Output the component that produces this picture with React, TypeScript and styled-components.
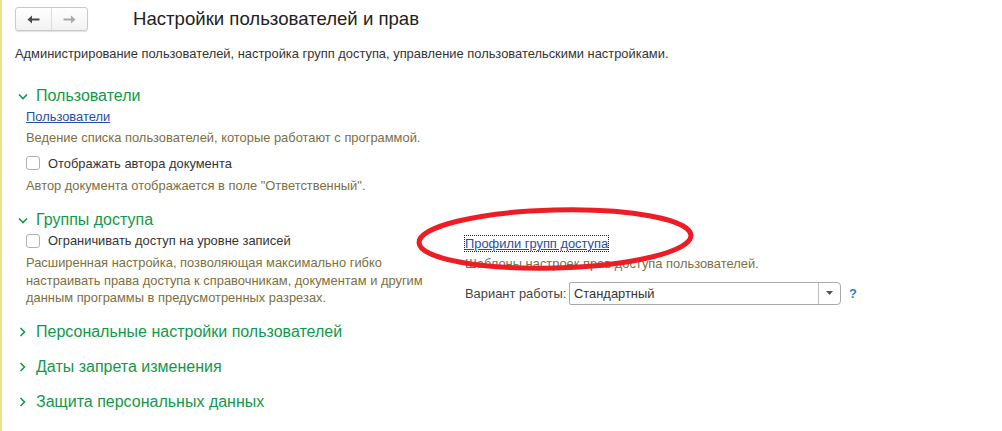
import React from "react";
import styled, { createGlobalStyle } from "styled-components";

const GlobalStyle = createGlobalStyle`
  html, body {
    margin: 0;
    padding: 0;
    background: #ffffff;
  }
  body {
    font-family: "Liberation Sans", Arial, sans-serif;
    font-size: 12.9px;
    color: #333333;
  }
`;

const Page = styled.div`
  position: relative;
  width: 1002px;
  height: 431px;
  box-sizing: border-box;
  border-left: 2px solid #f1df8a;
  padding: 7px 0 0 13px;
  overflow: hidden;
`;

const Header = styled.div`
  display: flex;
  align-items: center;
  height: 24px;
`;

const NavGroup = styled.div`
  display: flex;
  width: 73px;
  height: 24px;
  box-sizing: border-box;
  border: 1px solid #c9c9c9;
  border-radius: 3px;
  background: linear-gradient(#ffffff, #f2f2f2);
  box-shadow: 0 1px 1px rgba(0, 0, 0, 0.12);
`;

const NavButton = styled.div<{ $divider?: boolean }>`
  flex: 1;
  display: flex;
  align-items: center;
  justify-content: center;
  border-right: ${(p) => (p.$divider ? "1px solid #dcdcdc" : "none")};
`;

const Title = styled.h1`
  margin: 0 0 0 45px;
  font-size: 18.6px;
  font-weight: normal;
  line-height: 24px;
  color: #222222;
`;

const Description = styled.div`
  margin-top: 15px;
  line-height: 16px;
  color: #333333;
`;

const GroupHeader = styled.div<{ $gap: number }>`
  display: flex;
  align-items: center;
  margin-top: ${(p) => p.$gap}px;
  height: 20px;
  font-size: 16px;
  color: #12984a;
`;

const Chevron = styled.span`
  display: inline-flex;
  width: 15px;
  justify-content: center;
  margin-right: 6px;
`;

const GroupBody = styled.div`
  padding-left: 11px;
`;

const Link = styled.a<{ $focused?: boolean }>`
  color: #1f4ea4;
  text-decoration: underline;
  line-height: 16px;
  outline: ${(p) => (p.$focused ? "1px dotted #222" : "none")};
  outline-offset: 0;
`;

const Line = styled.div<{ $gap?: number }>`
  margin-top: ${(p) => p.$gap ?? 0}px;
  line-height: 21px;
`;

const Note = styled.div<{ $gap?: number }>`
  margin-top: ${(p) => p.$gap ?? 0}px;
  line-height: 17.5px;
  color: #7b6f42;
`;

const CheckRow = styled.label<{ $gap?: number }>`
  display: flex;
  align-items: center;
  margin-top: ${(p) => p.$gap ?? 0}px;
  height: 21px;
  color: #333333;
`;

const CheckBox = styled.span`
  width: 14px;
  height: 14px;
  box-sizing: border-box;
  border: 1px solid #b0b0b0;
  border-radius: 3px;
  background: #ffffff;
  margin-right: 8px;
`;

const Columns = styled.div`
  display: grid;
  grid-template-columns: 439px 1fr;
`;

const Column = styled.div<{ $top?: number }>`
  padding-top: ${(p) => p.$top ?? 0}px;
`;

const FieldRow = styled.div`
  display: flex;
  align-items: center;
  margin-top: 9px;
  height: 23px;
`;

const FieldLabel = styled.span`
  width: 104px;
  color: #444444;
`;

const Combo = styled.div`
  display: flex;
  width: 272px;
  height: 23px;
  box-sizing: border-box;
  border: 1px solid #a9a9a9;
  border-radius: 2px 4px 4px 2px;
  background: #ffffff;
`;

const ComboValue = styled.div`
  flex: 1;
  padding-left: 4px;
  line-height: 21px;
  color: #333333;
`;

const ComboButton = styled.div`
  width: 21px;
  border-left: 1px solid #bdbdbd;
  display: flex;
  align-items: center;
  justify-content: center;
`;

const Help = styled.span`
  margin-left: 8px;
  font-weight: bold;
  color: #2d7fcf;
`;

const Highlight = styled.svg`
  position: absolute;
  left: 412px;
  top: 205px;
  pointer-events: none;
`;

const DownChevron = () => (
  <svg width="10" height="7" viewBox="0 0 10 7">
    <path d="M1 1.5 L5 5.5 L9 1.5" fill="none" stroke="#12984a" strokeWidth="1.6" />
  </svg>
);

const RightChevron = () => (
  <svg width="7" height="10" viewBox="0 0 7 10">
    <path d="M1.5 1 L5.5 5 L1.5 9" fill="none" stroke="#12984a" strokeWidth="1.6" />
  </svg>
);

const Arrow = ({ dir, color }: { dir: "left" | "right"; color: string }) => (
  <svg width="13" height="9" viewBox="0 0 13 9" style={{ transform: dir === "right" ? "scaleX(-1)" : undefined }}>
    <path d="M0.5 4.5 L5 0.5 L5 3.5 L12.5 3.5 L12.5 5.5 L5 5.5 L5 8.5 Z" fill={color} />
  </svg>
);

const collapsed = [
  "Персональные настройки пользователей",
  "Даты запрета изменения",
  "Защита персональных данных",
];

const App: React.FC = () => {
  return (
    <>
      <GlobalStyle />
      <Page>
        <Header>
          <NavGroup>
            <NavButton $divider>
              <Arrow dir="left" color="#4a4a4a" />
            </NavButton>
            <NavButton>
              <Arrow dir="right" color="#a9a9a9" />
            </NavButton>
          </NavGroup>
          <Title>Настройки пользователей и прав</Title>
        </Header>

        <Description>
          Администрирование пользователей, настройка групп доступа, управление пользовательскими настройками.
        </Description>

        <GroupHeader $gap={24}>
          <Chevron>
            <DownChevron />
          </Chevron>
          Пользователи
        </GroupHeader>
        <GroupBody>
          <Line>
            <Link href="#">Пользователи</Link>
          </Line>
          <Note $gap={2}>Ведение списка пользователей, которые работают с программой.</Note>
          <CheckRow $gap={6}>
            <CheckBox />
            Отображать автора документа
          </CheckRow>
          <Note $gap={3}>Автор документа отображается в поле "Ответственный".</Note>
        </GroupBody>

        <GroupHeader $gap={16}>
          <Chevron>
            <DownChevron />
          </Chevron>
          Группы доступа
        </GroupHeader>
        <GroupBody>
          <Columns>
            <Column>
              <CheckRow $gap={0}>
                <CheckBox />
                Ограничивать доступ на уровне записей
              </CheckRow>
              <Note $gap={3}>
                Расширенная настройка, позволяющая максимально гибко
                <br />
                настраивать права доступа к справочникам, документам и другим
                <br />
                данным программы в предусмотренных разрезах.
              </Note>
            </Column>
            <Column $top={3}>
              <Line>
                <Link href="#" $focused>
                  Профили групп доступа
                </Link>
              </Line>
              <Note $gap={1}>Шаблоны настроек прав доступа пользователей.</Note>
              <FieldRow>
                <FieldLabel>Вариант работы:</FieldLabel>
                <Combo>
                  <ComboValue>Стандартный</ComboValue>
                  <ComboButton>
                    <svg width="7" height="4" viewBox="0 0 7 4">
                      <path d="M0 0 L7 0 L3.5 4 Z" fill="#555555" />
                    </svg>
                  </ComboButton>
                </Combo>
                <Help>?</Help>
              </FieldRow>
            </Column>
          </Columns>
        </GroupBody>

        {collapsed.map((title) => (
          <GroupHeader key={title} $gap={15}>
            <Chevron>
              <RightChevron />
            </Chevron>
            {title}
          </GroupHeader>
        ))}

        <Highlight width="284" height="70" viewBox="0 0 284 70">
          <ellipse
            cx="141"
            cy="34"
            rx="136"
            ry="29"
            fill="none"
            stroke="#ee1c24"
            strokeWidth="5"
            transform="rotate(-1.5 141 34)"
          />
        </Highlight>
      </Page>
    </>
  );
};

export default App;
